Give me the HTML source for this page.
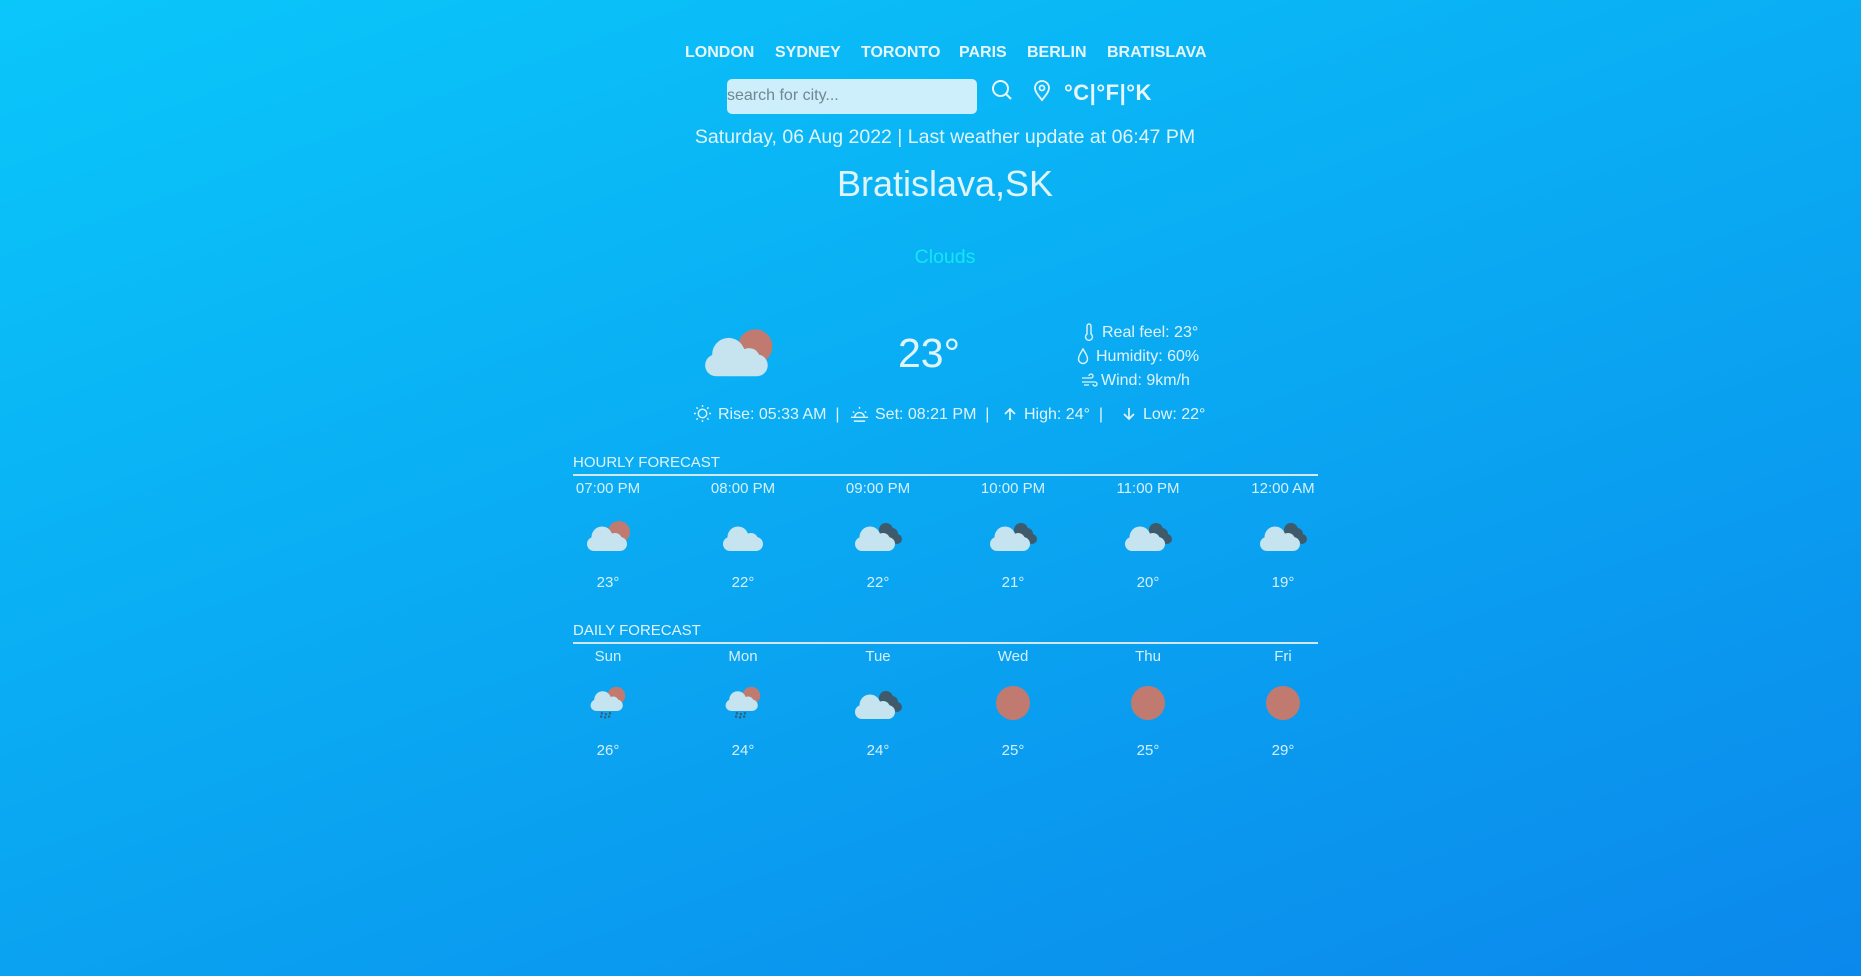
<!DOCTYPE html>
<html><head><meta charset="utf-8"><style>
*{margin:0;padding:0;box-sizing:border-box}
html,body{width:1861px;height:976px;overflow:hidden}
body{background:linear-gradient(160deg,#0ac7fa 0%,#0aa8f2 50%,#0b88ec 100%);font-family:"Liberation Sans",sans-serif;color:#d6f0fb;position:relative}
.a{position:absolute;white-space:nowrap}
.c{transform:translateX(-50%)}
.nav{top:44px;font-weight:bold;font-size:16px;color:#e8f6fd}
.lbl{font-size:15px}
.hr{position:absolute;left:573px;width:745px;height:2px;background:#d0e8f2}
svg{position:absolute;overflow:visible}
</style></head><body>
<svg width="0" height="0" style="position:absolute">
<defs>
<g id="cl"><rect x="2" y="18" width="40" height="14" rx="7" fill="#c5e4f0"/><circle cx="17" cy="18" r="10.5" fill="#c5e4f0"/><circle cx="30" cy="21" r="7" fill="#c5e4f0"/></g>
<g id="sun"><circle cx="34" cy="13" r="11" fill="#c17a6f"/></g>
<g id="dk"><circle cx="33" cy="11" r="7" fill="#3e5a6b"/><circle cx="39" cy="15" r="6" fill="#3e5a6b"/><circle cx="44" cy="20" r="5" fill="#3e5a6b"/></g>
<g id="rain" fill="#3e5a6b"><circle cx="16" cy="35" r="1.5"/><circle cx="15" cy="39" r="1.5"/><circle cx="21" cy="36" r="1.5"/><circle cx="20" cy="40" r="1.5"/><circle cx="26" cy="35" r="1.5"/><circle cx="25" cy="39" r="1.5"/></g>
</defs></svg>

<div class="a nav" style="left:685px">LONDON</div>
<div class="a nav" style="left:775px">SYDNEY</div>
<div class="a nav" style="left:861px">TORONTO</div>
<div class="a nav" style="left:959px">PARIS</div>
<div class="a nav" style="left:1027px">BERLIN</div>
<div class="a nav" style="left:1107px">BRATISLAVA</div>

<div class="a" style="left:727px;top:79px;width:250px;height:35px;background:#cdeefb;border-radius:5px;font-size:16px;color:#6f8790;padding-top:8px">search for city...</div>
<svg style="left:991px;top:79px" width="22" height="22" viewBox="0 0 22 22"><circle cx="9.5" cy="9.5" r="7.5" fill="none" stroke="#e8f6fd" stroke-width="2"/><line x1="15" y1="15" x2="20" y2="20" stroke="#e8f6fd" stroke-width="2"/></svg>
<svg style="left:1033px;top:80px" width="18" height="22" viewBox="0 0 18 22"><path d="M9 20C4 14 2 11 2 8a7 7 0 0114 0c0 3-2 6-7 12z" fill="none" stroke="#e8f6fd" stroke-width="1.8"/><circle cx="9" cy="8" r="2.5" fill="none" stroke="#e8f6fd" stroke-width="1.8"/></svg>
<div class="a" style="left:1064px;top:80px;font-size:22px;font-weight:bold;color:#e8f6fd;letter-spacing:0.5px">°C|°F|°K</div>

<div class="a c" style="left:945px;top:126px;font-size:19.5px;color:#e0f4fc">Saturday, 06 Aug 2022 | Last weather update at 06:47 PM</div>
<div class="a c" style="left:945px;top:163px;font-size:36px;color:#e0f4fc">Bratislava,SK</div>
<div class="a c" style="left:945px;top:246px;font-size:19.5px;color:#12e6f5">Clouds</div>

<svg style="left:702px;top:326px" width="72" height="52" viewBox="0 0 46 33"><use href="#sun"/><use href="#cl"/></svg>
<div class="a c" style="left:929px;top:330px;font-size:41px;color:#e0f4fc">23°</div>
<svg style="left:1084px;top:323px" width="10" height="18" viewBox="0 0 10 18"><path d="M3 11V3a2 2 0 014 0v8a3.5 3.5 0 11-4 0z" fill="none" stroke="#e0f4fc" stroke-width="1.4"/></svg>
<div class="a" style="left:1102px;top:324px;font-size:16px;color:#e0f4fc">Real feel: 23°</div>
<svg style="left:1077px;top:348px" width="12" height="17" viewBox="0 0 12 17"><path d="M6 1C3 6 1.5 8.5 1.5 11a4.5 4.5 0 009 0C10.5 8.5 9 6 6 1z" fill="none" stroke="#e0f4fc" stroke-width="1.4"/></svg>
<div class="a" style="left:1096px;top:348px;font-size:16px;color:#e0f4fc">Humidity: 60%</div>
<svg style="left:1081px;top:374px" width="16" height="14" viewBox="0 0 16 14"><path d="M1 4h9a2 2 0 10-2-2M1 8h13a2 2 0 11-2 2M3 11h5" fill="none" stroke="#e0f4fc" stroke-width="1.3"/></svg>
<div class="a" style="left:1101px;top:372px;font-size:16px;color:#e0f4fc">Wind: 9km/h</div>

<svg style="left:693px;top:404px" width="19" height="19" viewBox="0 0 20 20" stroke="#e0f4fc" stroke-width="1.5" fill="none"><circle cx="10" cy="10" r="4.5"/><path d="M10 1v2M10 17v2M1 10h2M17 10h2M3.6 3.6l1.4 1.4M15 15l1.4 1.4M3.6 16.4L5 15M15 5l1.4-1.4"/></svg>
<div class="a" style="left:718px;top:406px;font-size:16px;color:#e0f4fc">Rise: 05:33 AM &nbsp;|</div>
<svg style="left:850px;top:404px" width="19" height="19" viewBox="0 0 20 20" stroke="#e0f4fc" stroke-width="1.5" fill="none"><path d="M5 14a5 5 0 0110 0M1 14h18M4 18h12M10 3v2M3 8l1.4 1M17 8l-1.4 1"/></svg>
<div class="a" style="left:875px;top:406px;font-size:16px;color:#e0f4fc">Set: 08:21 PM &nbsp;|</div>
<svg style="left:1003px;top:407px" width="14" height="14" viewBox="0 0 14 14" stroke="#e0f4fc" stroke-width="1.7" fill="none"><path d="M7 13V2M2 7l5-5 5 5"/></svg>
<div class="a" style="left:1024px;top:406px;font-size:16px;color:#e0f4fc">High: 24° &nbsp;|</div>
<svg style="left:1122px;top:407px" width="14" height="14" viewBox="0 0 14 14" stroke="#e0f4fc" stroke-width="1.7" fill="none"><path d="M7 1v11M2 7l5 5 5-5"/></svg>
<div class="a" style="left:1143px;top:406px;font-size:16px;color:#e0f4fc">Low: 22°</div>

<div class="a" style="left:573px;top:454px;font-size:15px;color:#e0f4fc">HOURLY FORECAST</div>
<div class="hr" style="top:474px"></div>
<div class="a" style="left:573px;top:622px;font-size:15px;color:#e0f4fc">DAILY FORECAST</div>
<div class="hr" style="top:642px"></div>

<div class="a c lbl" style="left:608px;top:480px">07:00 PM</div>
<div class="a c lbl" style="left:743px;top:480px">08:00 PM</div>
<div class="a c lbl" style="left:878px;top:480px">09:00 PM</div>
<div class="a c lbl" style="left:1013px;top:480px">10:00 PM</div>
<div class="a c lbl" style="left:1148px;top:480px">11:00 PM</div>
<div class="a c lbl" style="left:1283px;top:480px">12:00 AM</div>

<svg style="left:585px;top:519px" width="46" height="33" viewBox="0 0 46 33"><use href="#sun"/><use href="#cl"/></svg>
<svg style="left:721px;top:519px" width="46" height="33" viewBox="0 0 46 33"><use href="#cl"/></svg>
<svg style="left:853px;top:519px" width="46" height="33" viewBox="0 0 46 33"><use href="#dk"/><use href="#cl"/></svg>
<svg style="left:988px;top:519px" width="46" height="33" viewBox="0 0 46 33"><use href="#dk"/><use href="#cl"/></svg>
<svg style="left:1123px;top:519px" width="46" height="33" viewBox="0 0 46 33"><use href="#dk"/><use href="#cl"/></svg>
<svg style="left:1258px;top:519px" width="46" height="33" viewBox="0 0 46 33"><use href="#dk"/><use href="#cl"/></svg>

<div class="a c lbl" style="left:608px;top:574px">23°</div>
<div class="a c lbl" style="left:743px;top:574px">22°</div>
<div class="a c lbl" style="left:878px;top:574px">22°</div>
<div class="a c lbl" style="left:1013px;top:574px">21°</div>
<div class="a c lbl" style="left:1148px;top:574px">20°</div>
<div class="a c lbl" style="left:1283px;top:574px">19°</div>

<div class="a c lbl" style="left:608px;top:648px">Sun</div>
<div class="a c lbl" style="left:743px;top:648px">Mon</div>
<div class="a c lbl" style="left:878px;top:648px">Tue</div>
<div class="a c lbl" style="left:1013px;top:648px">Wed</div>
<div class="a c lbl" style="left:1148px;top:648px">Thu</div>
<div class="a c lbl" style="left:1283px;top:648px">Fri</div>

<svg style="left:589px;top:685px" width="37" height="35" viewBox="0 0 46 43"><use href="#sun"/><use href="#cl"/><use href="#rain"/></svg>
<svg style="left:724px;top:685px" width="37" height="35" viewBox="0 0 46 43"><use href="#sun"/><use href="#cl"/><use href="#rain"/></svg>
<svg style="left:853px;top:687px" width="46" height="33" viewBox="0 0 46 33"><use href="#dk"/><use href="#cl"/></svg>
<svg style="left:996px;top:686px" width="34" height="34"><circle cx="17" cy="17" r="17" fill="#c17a6f"/></svg>
<svg style="left:1131px;top:686px" width="34" height="34"><circle cx="17" cy="17" r="17" fill="#c17a6f"/></svg>
<svg style="left:1266px;top:686px" width="34" height="34"><circle cx="17" cy="17" r="17" fill="#c17a6f"/></svg>

<div class="a c lbl" style="left:608px;top:742px">26°</div>
<div class="a c lbl" style="left:743px;top:742px">24°</div>
<div class="a c lbl" style="left:878px;top:742px">24°</div>
<div class="a c lbl" style="left:1013px;top:742px">25°</div>
<div class="a c lbl" style="left:1148px;top:742px">25°</div>
<div class="a c lbl" style="left:1283px;top:742px">29°</div>
</body></html>
